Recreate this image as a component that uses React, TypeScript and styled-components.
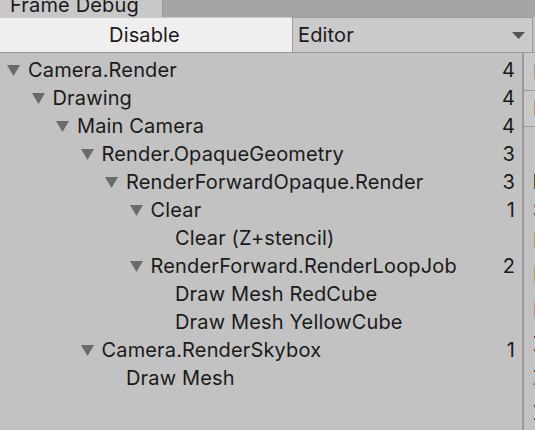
import React from 'react';
import styled, { createGlobalStyle } from 'styled-components';

const GlobalStyle = createGlobalStyle`
    html, body {
        margin: 0;
        padding: 0;
        background: #c2c2c2;
    }
    body {
        font-family: Inter, "Noto Sans", "Liberation Sans", sans-serif;
        color: #1a1a1a;
    }
`

type Node = { label: string; level: number; count?: number; open?: boolean };

const events: Node[] = [
    { label: 'Camera.Render', level: 0, count: 4, open: true },
    { label: 'Drawing', level: 1, count: 4, open: true },
    { label: 'Main Camera', level: 2, count: 4, open: true },
    { label: 'Render.OpaqueGeometry', level: 3, count: 3, open: true },
    { label: 'RenderForwardOpaque.Render', level: 4, count: 3, open: true },
    { label: 'Clear', level: 5, count: 1, open: true },
    { label: 'Clear (Z+stencil)', level: 6 },
    { label: 'RenderForward.RenderLoopJob', level: 5, count: 2, open: true },
    { label: 'Draw Mesh RedCube', level: 6 },
    { label: 'Draw Mesh YellowCube', level: 6 },
    { label: 'Camera.RenderSkybox', level: 3, count: 1, open: true },
    { label: 'Draw Mesh', level: 4 },
];

const details = ['Shader', 'Pass', 'Keywords', 'Blend', 'ZClip', 'ZTest', 'ZWrite'];

export default function App() {
    return (
        <Window>
            <GlobalStyle />
            <TabBar>
                <Tab>
                    <TabLabel>Frame Debug</TabLabel>
                </Tab>
            </TabBar>
            <Toolbar>
                <ToolButton>Disable</ToolButton>
                <Dropdown>
                    <span>Editor</span>
                    <svg width="13" height="7" viewBox="0 0 13 7">
                        <polygon points="0,0 13,0 6.5,7" fill="#555" />
                    </svg>
                </Dropdown>
                <ToolEnd />
            </Toolbar>
            <Body>
                <Tree>
                    {events.map((e) => (
                        <Row key={e.label} $level={e.level}>
                            <Foldout>
                                {e.open && (
                                    <svg width="13" height="11" viewBox="0 0 13 11">
                                        <polygon points="0,0 13,0 6.5,11" fill="#6b6b6b" />
                                    </svg>
                                )}
                            </Foldout>
                            <Label>{e.label}</Label>
                            {e.count !== undefined && <Count>{e.count}</Count>}
                        </Row>
                    ))}
                </Tree>
                <Splitter />
                <Details>
                    <DetailBox>Frame Event</DetailBox>
                    <DetailBox>Frame Target</DetailBox>
                    <DetailHeader>RenderForward.RenderLoopJob</DetailHeader>
                    {details.map((d, i) => (
                        <DetailRow key={d} $tall={i > 0}>{d}</DetailRow>
                    ))}
                </Details>
            </Body>
        </Window>
    );
}

const Window = styled.div`
    width: 535px;
    height: 430px;
    display: flex;
    flex-direction: column;
    overflow: hidden;
    font-size: 20px;
    letter-spacing: 0.15px;
`

const TabBar = styled.div`
    height: 17px;
    background: #a5a5a5;
    display: flex;
    flex-shrink: 0;
`

const Tab = styled.div`
    width: 163px;
    background: #c8c8c8;
    border-right: 1px solid #9a9a9a;
    overflow: hidden;
    padding-left: 10px;
    box-sizing: border-box;
`

const TabLabel = styled.div`
    line-height: 24px;
    margin-top: -7px;
    white-space: nowrap;
`

const Toolbar = styled.div`
    height: 36px;
    display: flex;
    flex-shrink: 0;
    background: #c8c8c8;
`

const ToolButton = styled.div`
    width: 292px;
    background: #efefef;
    border-top: 1px solid #c8c8c8;
    border-bottom: 1px solid #9a9a9a;
    box-sizing: border-box;
    display: flex;
    align-items: center;
    justify-content: center;
    padding-right: 3px;
`

const Dropdown = styled.div`
    width: 241px;
    background: #cbcbcb;
    border: 1px solid #9a9a9a;
    box-sizing: border-box;
    display: flex;
    align-items: center;
    justify-content: space-between;
    padding: 0 7px 0 5px;
`

const ToolEnd = styled.div`
    flex: 1;
    background: #c2c2c2;
    border-bottom: 1px solid #9a9a9a;
`

const Body = styled.div`
    flex: 1;
    display: flex;
    min-height: 0;
`

const Tree = styled.div`
    width: 522px;
    flex-shrink: 0;
    padding: 3px 7px 0 0;
    box-sizing: border-box;
`

const Row = styled.div<{ $level: number }>`
    height: 28px;
    display: flex;
    align-items: center;
    padding-left: ${(p) => 7 + p.$level * 24.5}px;
    white-space: nowrap;
`

const Foldout = styled.div`
    width: 21px;
    flex-shrink: 0;
    display: flex;
    padding-top: 1px;
`

const Label = styled.span`
    flex: 1;
`

const Count = styled.span`
    text-align: right;
`

const Splitter = styled.div`
    width: 2px;
    background: #9a9a9a;
    flex-shrink: 0;
`

const Details = styled.div`
    flex: 1;
    overflow: hidden;
    white-space: nowrap;
    display: flex;
    flex-direction: column;
`

const DetailBox = styled.div`
    height: 35px;
    display: flex;
    align-items: center;
    padding-left: 9px;
    background: #c8c8c8;
    border-bottom: 1px solid #9a9a9a;
    &:first-child {
        height: 38px;
    }
`

const DetailHeader = styled.div`
    height: 28px;
    margin-top: 42px;
    display: flex;
    align-items: center;
    padding-left: 9px;
    font-weight: 700;
`

const DetailRow = styled.div<{ $tall: boolean }>`
    height: ${(p) => (p.$tall ? 35 : 28)}px;
    display: flex;
    align-items: center;
    padding-left: 9px;
`
